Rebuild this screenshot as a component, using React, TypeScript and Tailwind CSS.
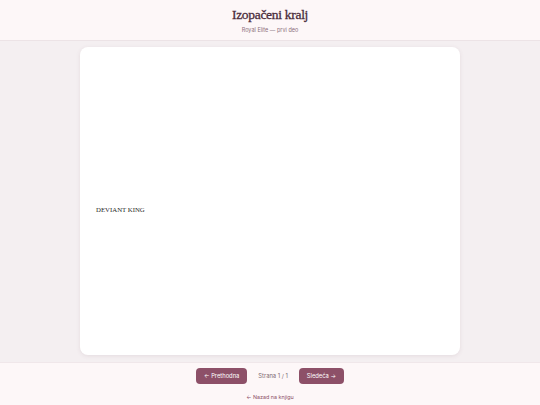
import React from "react";

export default function App() {
  return (
    <div className="w-[540px] h-[405px] flex flex-col bg-[#f4eff1] font-['Inter',sans-serif] overflow-hidden">
      {/* Header */}
      <header className="h-[41px] shrink-0 flex flex-col items-center justify-center bg-[#fdf7f8] border-b border-[#ece3e6]">
        <h1 className="font-['Liberation_Serif',serif] text-[13.5px] leading-[16px] font-normal text-[#4a2c3b] tracking-[-0.3px] [-webkit-text-stroke:0.3px_#4a2c3b] mt-[1px]">
          Izopačeni kralj
        </h1>
        <p className="text-[5.5px] leading-[8px] text-[#8d6f7b] mt-[3px]">Royal Elite — prvi deo</p>
      </header>

      {/* Page */}
      <main className="flex-1 flex justify-center pt-[6px] pb-[7px]">
        <div className="w-[380px] h-full bg-white rounded-[8px] shadow-[0_1px_4px_rgba(120,80,95,0.12)] px-4 pt-[158px]">
          <p className="font-['Liberation_Serif',serif] text-[6.8px] text-[#2a2a2a]">DEVIANT KING</p>
        </div>
      </main>

      {/* Footer */}
      <footer className="h-[43px] shrink-0 bg-[#fdf7f8] border-t border-[#f0e7ea] flex flex-col items-center pt-[5px]">
        <div className="flex items-center">
          <button className="h-[16px] px-[8px] rounded-[4px] bg-[#8d5068] text-white text-[5.8px] flex items-center">
            ← Prethodna
          </button>
          <span className="text-[5.8px] text-[#7d6a72] mx-[11px]">Strana 1 / 1</span>
          <button className="h-[16px] px-[8px] rounded-[4px] bg-[#8d5068] text-white text-[5.8px] flex items-center">
            Sledeća →
          </button>
        </div>
        <a className="mt-[9px] text-[5.4px] text-[#8d5068]">← Nazad na knjigu</a>
      </footer>
    </div>
  );
}
